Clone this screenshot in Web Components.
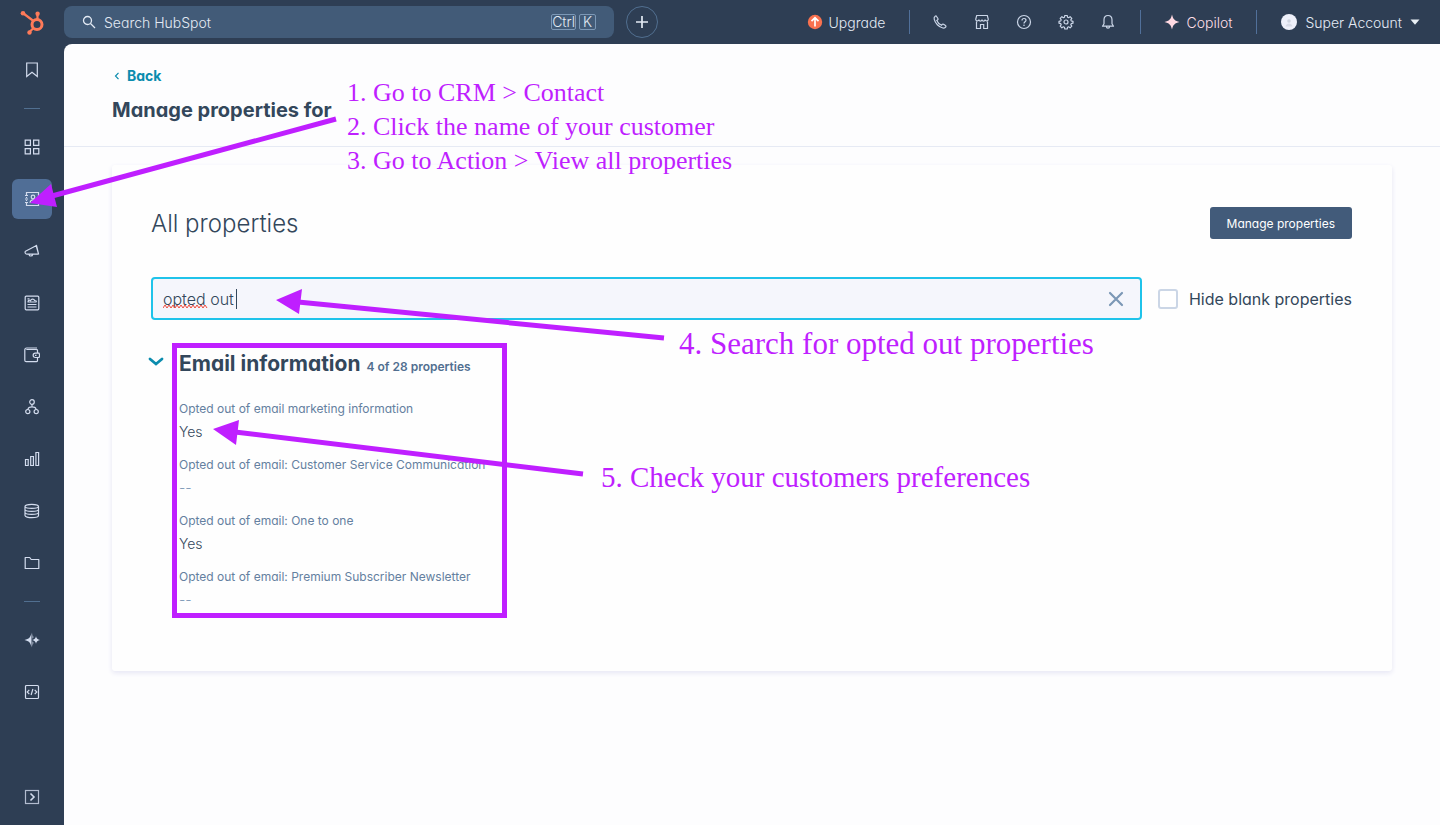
<!DOCTYPE html>
<html lang="en">
<head>
<meta charset="utf-8">
<title>Manage properties</title>
<style>
  html, body { margin: 0; }
  body {
    font-family: Inter, "Open Sans", sans-serif;
    font-feature-settings: "cv11";
    color: #33475b;
    background: #fdfdfe;
  }
</style>
</head>
<body>
<crm-app>
  <top-bar slot="top"></top-bar>
  <side-nav slot="nav"></side-nav>
  <page-header slot="page">Manage properties for</page-header>
  <property-card slot="page">
    <property-group label="Email information" count="4 of 28 properties">
      <property-item label="Opted out of email marketing information">Yes</property-item>
      <property-item label="Opted out of email: Customer Service Communication" empty>--</property-item>
      <property-item label="Opted out of email: One to one">Yes</property-item>
      <property-item label="Opted out of email: Premium Subscriber Newsletter" empty>--</property-item>
    </property-group>
  </property-card>
</crm-app>
<guide-overlay></guide-overlay>

<script>
const ICONS = {
  logo: [26, 28, '<g fill="none" stroke="#ff7a59" stroke-width="2.200"><circle cx="18" cy="16.500" r="5" stroke-width="3"/><path d="M18.500 11.500V5M14.500 13 4.500 5.500M14.500 20 10.500 24"/></g><g fill="#ff7a59"><circle cx="4" cy="5.200" r="2.300"/><circle cx="18.600" cy="5.700" r="2.200"/><circle cx="10.500" cy="24.500" r="2.200"/></g>'],
  search: [14, 14, '<g fill="none" stroke="currentColor" stroke-width="1.300"><circle cx="5.500" cy="5.500" r="4"/><path d="m8.500 8.500 4.500 4.500"/></g>'],
  plus: [14, 14, '<path d="M7 1v12M1 7h12" stroke="currentColor" stroke-width="1.700" fill="none"/>'],
  upgrade: [16, 16, '<circle cx="8" cy="8" r="7.200" fill="#f8714f"/><path d="M8 12.500V4M4.500 7.200 8 3.800l3.500 3.400" stroke="#fff" stroke-width="1.700" fill="none"/>'],
  phone: [16, 16, '<path d="M3.200 2.200c-1 .7-1.300 1.700-1 3 .9 4 4.600 7.800 8.700 8.800 1.300.3 2.300-.1 2.900-1.100.3-.5.2-1-.3-1.300l-2-1.400c-.5-.3-1-.2-1.300.2l-.7.900C7.500 10.400 5.600 8.400 4.800 6.500l.9-.7c.4-.3.500-.8.200-1.300L4.600 2.500c-.3-.5-.9-.6-1.400-.3z" fill="none" stroke="currentColor"/>'],
  store: [16, 16, '<path d="M2.700 1.500h10.600l1 3.800c0 2-2.700 2.300-3.200.3-.4 1.900-2.700 1.900-3.100 0-.4 1.900-2.700 1.900-3.100 0-.5 2-3.200 1.700-3.200-.3zM2.500 7.500v7h4v-4h3.200v4h3.800v-7" fill="none" stroke="currentColor"/>'],
  help: [16, 16, '<g fill="none" stroke="currentColor"><circle cx="8" cy="8" r="6.500"/><path d="M6 6.400c0-1.200.9-1.900 2-1.900s2 .7 2 1.800c0 1.400-2 1.500-2 3.100"/></g><circle cx="8" cy="11.300" r=".8" fill="currentColor"/>'],
  gear: [16, 16, '<g fill="none" stroke="currentColor"><circle cx="8" cy="8" r="2"/><path d="M6.800 1.500h2.400l.4 1.800 1 .4 1.500-1 1.700 1.700-1 1.500.4 1 1.800.4v1.900l-1.800.4-.4 1 1 1.500-1.700 1.700-1.500-1-1 .4-.4 1.800H6.800l-.4-1.800-1-.4-1.500 1-1.700-1.700 1-1.500-.4-1L1 9.200V7.300l1.800-.4.4-1-1-1.500 1.700-1.700 1.500 1 1-.4z" stroke-linejoin="round"/></g>'],
  bell: [16, 16, '<path d="M8 1.500c-2.500 0-4 1.700-4 4.200v4L2.500 12.200h11L12 9.700v-4c0-2.500-1.500-4.200-4-4.200zM6.400 12.500a1.600 1.600 0 0 0 3.200 0" fill="none" stroke="currentColor" stroke-linejoin="round"/>'],
  spark: [16, 16, '<path d="M8 .5c1 4.600 2.900 6.500 7.500 7.500-4.600 1-6.500 2.900-7.500 7.500C7 10.900 5.100 9 .5 8 5.100 7 7 5.100 8 .5z" fill="#ffd9e2"/>'],
  avatar: [16, 16, '<circle cx="8" cy="8" r="8" fill="#eef0fa"/><circle cx="8" cy="7" r="1.800" fill="#cfd4e0"/><path d="M4.500 12.500c.5-2 1.800-3 3.500-3s3 1 3.500 3z" fill="#d9dce8"/>'],
  caret: [10, 6, '<path d="M.5.500h9L5 5.800z" fill="#eaf0f6"/>'],
  bookmark: [16, 16, '<path d="M2.700 1h10.600v13.500L8 10.300l-5.300 4.200z" fill="none" stroke="currentColor"/>'],
  grid: [16, 16, '<path d="M1.200 1.200h5.200v5.200H1.200zM9.600 1.200h5.200v5.200H9.600zM1.200 9.600h5.200v5.200H1.200zM9.600 9.600h5.200v5.200H9.600z" fill="none" stroke="currentColor"/>'],
  contacts: [16, 16, '<g fill="none" stroke="currentColor"><path d="M2.500 4V1.500h12v13h-12V12M2.500 6v1M2.500 9v1M1 4.500h3M1 8h3M1 11.500h3"/><circle cx="9" cy="6" r="1.800"/><path d="M6 11.800c.3-2 1.400-3 3-3s2.700 1 3 3"/></g>'],
  megaphone: [16, 16, '<path d="M1.500 8.200 12.500 2.500l2 8.500-11.700.2c-1.500 0-2.200-1.900-1.300-3zM5 11.300c.3 2.300 3.400 2.200 3.700 0M12 2l2.700 9.500" fill="none" stroke="currentColor" stroke-linejoin="round"/>'],
  page: [16, 16, '<g fill="none" stroke="currentColor"><rect x="1.200" y="1.200" width="13.600" height="13.600" rx="1"/><path d="M3.500 9.500h9M3.500 12h9M3.500 7h9M3.500 3.800h2M4 6.500c.2-1.300 1.800-1.600 2.600-.8.500-1.900 3.400-2 4-.2 1.200-.1 1.900.4 2 1.300"/></g>'],
  wallet: [16, 16, '<path d="M13.500 5.800V3.500c0-.6-.4-1-1-1H2.300M13 1H2.700C1.700 1 .8 1.900.8 3v10.200c0 .8.700 1.500 1.500 1.500h9.900c.8 0 1.300-.5 1.300-1.300v-2.900M15 6.200h-3.700a2.100 2.100 0 0 0 0 4.300H15c.7-1.300.7-3 0-4.300zM11 8.300h1.500" fill="none" stroke="currentColor"/>'],
  nodes: [16, 16, '<g fill="none" stroke="currentColor"><circle cx="8" cy="3" r="2.300"/><circle cx="3.800" cy="12.600" r="2.100"/><circle cx="12.200" cy="12.600" r="2.100"/><path d="M8 5.300v2.500M4 10.500c0-1.800 1.500-2.700 4-2.700s4 .9 4 2.700"/></g>'],
  chart: [16, 16, '<path d="M1.500 8.500h2.700v6H1.500zM6.700 5.500h2.700v9H6.700zM11.900 1.500h2.700v13h-2.700z" fill="none" stroke="currentColor"/>'],
  database: [16, 16, '<path d="M1 3.500c0-2.900 13.500-2.900 13.500 0v9c0 2.900-13.500 2.900-13.500 0zM1 3.500c0 2.500 13.500 2.500 13.500 0M1 6.500C1 9 14.500 9 14.500 6.500M1 9.500c0 2.500 13.500 2.500 13.500 0" fill="none" stroke="currentColor"/>'],
  folder: [16, 16, '<path d="M1.200 13.500v-11h4.500l1.500 2h7.600v9z" fill="none" stroke="currentColor" stroke-linejoin="round"/>'],
  sparkles: [16, 16, '<path d="M7.500.5v15C6.700 10.800 5 9 .5 8 5 7 6.700 5.200 7.500.5zM8.500.5c.1 2 .3 3.500 1 4.500-.3.800-.6 1.300-1 1.700zM8.500 15.500c.1-2 .3-3.500 1-4.500-.3-.8-.6-1.300-1-1.700zM12 4.200c.5 2.300 1.500 3.300 4 3.800-2.500.5-3.500 1.500-4 3.800-.5-2.300-1.500-3.300-4-3.800 2.500-.5 3.500-1.500 4-3.800z" fill="currentColor"/>'],
  code: [16, 16, '<g fill="none" stroke="currentColor"><rect x="1.500" y="1.500" width="13" height="13" rx="1"/><path d="M5.300 5.800 3.200 8l2.100 2.200M10.700 5.800 12.800 8l-2.100 2.200M8.900 5l-1.800 6"/></g>'],
  expand: [16, 16, '<g fill="none" stroke="currentColor"><rect x="1.500" y="1.500" width="13" height="13" opacity=".8"/><path d="m6.500 4.500 3.500 3.500-3.500 3.500" stroke-width="1.600"/></g>'],
  back: [6, 8, '<path d="M4.500.8 1.500 4l3 3.200" fill="none" stroke="currentColor"/>'],
  chevron: [16, 10, '<path d="m2 2 6 5 6-5" fill="none" stroke="currentColor" stroke-width="2.800" stroke-linecap="round"/>'],
  close: [16, 16, '<path d="m2 2 12 12M14 2 2 14" fill="none" stroke="currentColor" stroke-width="2.200" stroke-linecap="round"/>']
};

/* Registers an element whose shadow root holds the given styles and markup. */
function define(name, css, html) {
  customElements.define(name, class extends HTMLElement {
    constructor() {
      super();
      this.attachShadow({ mode: 'open' });
    }
    connectedCallback() {
      const t = document.createElement('template');
      t.innerHTML = `<style>*{box-sizing:border-box}${css}</style>${typeof html === 'function' ? html(this) : html}`;
      this.shadowRoot.replaceChildren(t.content.cloneNode(true));
    }
  });
}
const attr = (el, n) => el.getAttribute(n) || '';

define('ui-icon', ':host{display:inline-flex;flex:none} svg{display:block;stroke-width:1.2}', el => {
  const [w, h, body] = ICONS[attr(el, 'name')];
  return `<svg width="${w}" height="${h}" viewBox="0 0 ${w} ${h}" aria-hidden="true">${body}</svg>`;
});

define('crm-app', `
  :host { display: grid; grid-template-columns: 64px 1fr; grid-template-rows: 44px 1fr; min-height: 100vh; background: #2e3e54; }
  .top { grid-column: 1 / -1; }
  main { background: #fdfdfe; border-top-left-radius: 8px; min-width: 0; padding-bottom: 24px; }
`, `
  <div class="top"><slot name="top"></slot></div>
  <slot name="nav"></slot>
  <main><slot name="page"></slot></main>
`);

define('top-bar', `
  :host { display: flex; align-items: center; height: 44px; padding-right: 20px; color: #e3eaf4; font-size: 14px; font-weight: 300; }
  a, button { display: flex; align-items: center; color: inherit; font: inherit; text-decoration: none; background: none; border: 0; padding: 0; white-space: nowrap; }
  .logo { width: 64px; justify-content: center; }
  .search { flex: 0 1 550px; display: flex; align-items: center; gap: 8px; height: 32px; padding: 0 18px; background: #425b78; border-radius: 8px; }
  input { flex: 1; min-width: 0; font: inherit; color: inherit; background: none; border: 0; outline: 0; padding: 0; }
  input::placeholder { color: #e3eaf4; opacity: 1; }
  .keys { display: flex; gap: 3px; }
  kbd { font: inherit; line-height: 14px; height: 16px; border: 1px solid #7c98b6; border-radius: 2px; }
  kbd + kbd { padding: 0 3px; }
  .add { width: 32px; height: 32px; margin-left: 12px; justify-content: center; border: 1px solid #516f90; border-radius: 50%; }
  .right { display: flex; align-items: center; margin-left: auto; }
  .right > a { gap: 6px; }
  .account { gap: 8px; }
  .tools { display: flex; gap: 18px; margin: 0 20px 0 18px; color: #cbd6e8; }
  .tools button { width: 24px; height: 24px; justify-content: center; }
  i { width: 1px; height: 24px; background: #51709a; }
  .up { margin-right: 24px; }
  .copilot { margin: 0 24px 0 23px; color: #ffdfe6; }
  .account { margin-left: 24px; }
`, `
  <a class="logo" href="#" aria-label="Home"><ui-icon name="logo"></ui-icon></a>
  <label class="search"><ui-icon name="search"></ui-icon>
    <input type="text" placeholder="Search HubSpot" aria-label="Search HubSpot">
    <span class="keys"><kbd>Ctrl</kbd><kbd>K</kbd></span></label>
  <button class="add" aria-label="Create"><ui-icon name="plus"></ui-icon></button>
  <div class="right">
    <a class="up" href="#"><ui-icon name="upgrade"></ui-icon>Upgrade</a><i></i>
    <div class="tools">
      <button aria-label="Calling"><ui-icon name="phone"></ui-icon></button>
      <button aria-label="Marketplace"><ui-icon name="store"></ui-icon></button>
      <button aria-label="Help"><ui-icon name="help"></ui-icon></button>
      <button aria-label="Settings"><ui-icon name="gear"></ui-icon></button>
      <button aria-label="Notifications"><ui-icon name="bell"></ui-icon></button>
    </div><i></i>
    <a class="copilot" href="#"><ui-icon name="spark"></ui-icon>Copilot</a><i></i>
    <button class="account"><ui-icon name="avatar"></ui-icon>Super Account<ui-icon name="caret"></ui-icon></button>
  </div>
`);

define('side-nav', `
  :host { display: block; color: #d3dcee; }
  nav { display: flex; flex-direction: column; align-items: center; gap: 12px; height: 100%; padding: 6px 0 8px; }
  a, button { display: flex; align-items: center; justify-content: center; width: 40px; height: 40px; border-radius: 6px; color: inherit; background: none; border: 0; padding: 0; }
  .on { background: #506e96; }
  hr { width: 16px; height: 1px; margin: 6px 0; border: 0; background: #516f90; }
  button { margin-top: auto; }
`, () => {
  const link = ([icon, label]) => `<a href="#" aria-label="${label}"${icon === 'contacts' ? ' class="on"' : ''}><ui-icon name="${icon}"></ui-icon></a>`;
  const main = [['grid', 'Workspaces'], ['contacts', 'CRM'], ['megaphone', 'Marketing'], ['page', 'Content'], ['wallet', 'Commerce'], ['nodes', 'Automations'], ['chart', 'Reporting'], ['database', 'Data'], ['folder', 'Library']];
  const extra = [['sparkles', 'AI'], ['code', 'Development']];
  return `<nav>${link(['bookmark', 'Bookmarks'])}<hr>${main.map(link).join('')}<hr>${extra.map(link).join('')}
    <button aria-label="Expand"><ui-icon name="expand"></ui-icon></button></nav>`;
});

define('page-header', `
  :host { display: block; height: 103px; padding: 20px 48px 0; border-bottom: 1px solid #e6eaf4; box-sizing: border-box; }
  a { display: flex; align-items: center; gap: 7px; width: max-content; padding-left: 2px; font-size: 14px; font-weight: 700; line-height: 24px; color: #0b8cae; text-decoration: none; }
  h1 { margin: 8px 0 0; font-size: 20px; font-weight: 700; line-height: 28px; }
`, `<a href="#"><ui-icon name="back"></ui-icon>Back</a><h1><slot></slot></h1>`);

define('property-card', `
  :host { display: block; margin: 18px 48px 0; padding: 42px 40px 60px 39px; background: #fefefe; box-shadow: 0 2px 5px #e6e6f4; border-radius: 3px; }
  header { display: flex; align-items: center; justify-content: space-between; height: 32px; }
  h2 { margin: 0; font-size: 24px; font-weight: 300; line-height: 32px; padding-top: 2px; }
  header button { height: 32px; padding: 0 17px; font: inherit; font-size: 12px; color: #fff; background: #425b7a; border: 0; border-radius: 3px; }
  .filter { display: flex; align-items: center; gap: 16px; margin: 38px 0 24px; }
  .box { position: relative; flex: 1; display: flex; align-items: center; height: 43px; padding: 0 16px 0 10px; border: 2px solid #1fc3ea; border-radius: 4px; background: #f5f6fc; }
  input[type=text] { flex: 1; min-width: 0; padding: 0; font: inherit; font-size: 16px; font-weight: 300; color: inherit; background: none; border: 0; outline: 0; }
  .mark { position: absolute; left: 10px; top: 10px; }
  .box button { display: flex; padding: 0; border: 0; background: none; color: #7c98b6; }
  label { display: flex; align-items: center; gap: 11px; font-size: 16px; font-weight: 400; white-space: nowrap; }
  input[type=checkbox] { appearance: none; width: 20px; height: 20px; margin: 0; border: 2px solid #cbd6e6; border-radius: 3px; background: #fff; }
`, `
  <header><h2>All properties</h2><button>Manage properties</button></header>
  <div class="filter">
    <div class="box">
      <input type="text" value="opted out" aria-label="Search properties" spellcheck="false">
      <svg class="mark" width="76" height="20" aria-hidden="true"><path d="M0 19l2-3 2 3 2-3 2 3 2-3 2 3 2-3 2 3 2-3 2 3 2-3 2 3 2-3 2 3 2-3 2 3 2-3 2 3 2-3 2 3 2-3 2 3" fill="none" stroke="#f04a3c"/><path d="M73.500 0v20" stroke="#33475b"/></svg>
      <button aria-label="Clear"><ui-icon name="close"></ui-icon></button>
    </div>
    <label><input type="checkbox">Hide blank properties</label>
  </div>
  <slot></slot>
`);

define('property-group', `
  :host { display: grid; grid-template-columns: 16px 1fr; column-gap: 15px; margin-left: -3px; }
  button { display: flex; align-items: center; height: 36px; padding: 0; border: 0; background: none; color: #0b8cae; }
  h3 { display: flex; align-items: baseline; gap: 6px; margin: 0 0 10px; font-size: 21px; font-weight: 700; line-height: 40px; }
  small { font-size: 12px; font-weight: 600; color: #516f90; }
  .items { grid-column: 2; display: grid; gap: 10px; }
`, el => `<button aria-label="Toggle group"><ui-icon name="chevron"></ui-icon></button>
  <h3>${attr(el, 'label')}<small>${attr(el, 'count')}</small></h3>
  <div class="items"><slot></slot></div>`);

define('property-item', `
  :host { display: block; }
  dl, dd { margin: 0; }
  dt { font-size: 12px; font-weight: 400; line-height: 24px; color: #6480a0; }
  dd { font-size: 14px; font-weight: 300; line-height: 22px; }
  :host([empty]) dd { color: #7c98b6; }
`, el => `<dl><dt>${attr(el, 'label')}</dt><dd><slot></slot></dd></dl>`);

/* Walkthrough notes and arrows floating over the page. */
define('guide-overlay', `
  :host { position: absolute; left: 0; top: 0; pointer-events: none; color: #bf1fff; font-family: "Liberation Serif", serif; font-feature-settings: normal; }
  svg { position: absolute; left: 0; top: 0; }
  ol, p { position: absolute; margin: 0; padding: 0; list-style: none; white-space: nowrap; }
  ol { left: 347px; top: 76px; font-size: 26px; line-height: 34px; }
  .four { left: 679px; top: 326px; font-size: 31px; line-height: 36px; }
  .five { left: 601px; top: 460px; font-size: 29px; line-height: 34px; }
`, `
  <svg width="680" height="640" aria-hidden="true">
    <rect x="174.500" y="345.500" width="330" height="270" fill="none" stroke="currentColor" stroke-width="5"/>
    <path d="M336 119 52 196M664 338 298 302M583 474 235 432" stroke="currentColor" stroke-width="5"/>
    <path d="M30 203 51 184 57 207zM276 300 302 289 299 314zM213 429 239 420 236 445z" fill="currentColor"/>
  </svg>
  <ol><li>1. Go to CRM &gt; Contact</li><li>2. Click the name of your customer</li><li>3. Go to Action &gt; View all properties</li></ol>
  <p class="four">4. Search for opted out properties</p>
  <p class="five">5. Check your customers preferences</p>
`);
</script>
</body>
</html>
